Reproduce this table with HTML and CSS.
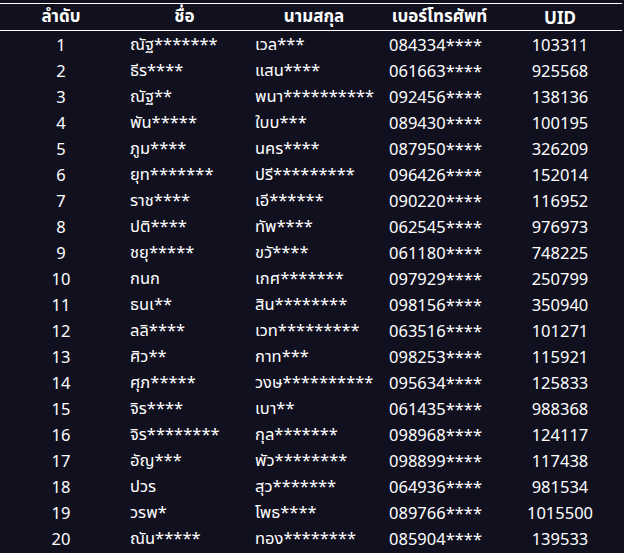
FILE: index.html
```html
<!DOCTYPE html>
<html lang="th">
<head>
<meta charset="utf-8">
<link rel="stylesheet" href="styles.css">
</head>
<body>
<table class="list">
<thead>
<tr><th class="c-no">ลำดับ</th><th class="c-name">ชื่อ</th><th class="c-sur">นามสกุล</th><th class="c-phone">เบอร์โทรศัพท์</th><th class="c-uid">UID</th></tr>
</thead>
<tbody>
<tr><td class="ctr">1</td><td>ณัฐ*******</td><td>เวล***</td><td>084334****</td><td class="ctr">103311</td></tr>
<tr><td class="ctr">2</td><td>ธีร****</td><td>แสน****</td><td>061663****</td><td class="ctr">925568</td></tr>
<tr><td class="ctr">3</td><td>ณัฐ**</td><td>พนา**********</td><td>092456****</td><td class="ctr">138136</td></tr>
<tr><td class="ctr">4</td><td>พัน*****</td><td>ใบบ***</td><td>089430****</td><td class="ctr">100195</td></tr>
<tr><td class="ctr">5</td><td>ภูม****</td><td>นคร****</td><td>087950****</td><td class="ctr">326209</td></tr>
<tr><td class="ctr">6</td><td>ยุท*******</td><td>ปรี*********</td><td>096426****</td><td class="ctr">152014</td></tr>
<tr><td class="ctr">7</td><td>ราช****</td><td>เอี******</td><td>090220****</td><td class="ctr">116952</td></tr>
<tr><td class="ctr">8</td><td>ปติ****</td><td>ทัพ****</td><td>062545****</td><td class="ctr">976973</td></tr>
<tr><td class="ctr">9</td><td>ชยุ*****</td><td>ขวั****</td><td>061180****</td><td class="ctr">748225</td></tr>
<tr><td class="ctr">10</td><td>กนก</td><td>เกศ*******</td><td>097929****</td><td class="ctr">250799</td></tr>
<tr><td class="ctr">11</td><td>ธนเ**</td><td>สิน********</td><td>098156****</td><td class="ctr">350940</td></tr>
<tr><td class="ctr">12</td><td>ลลิ****</td><td>เวท*********</td><td>063516****</td><td class="ctr">101271</td></tr>
<tr><td class="ctr">13</td><td>ศิว**</td><td>กาท***</td><td>098253****</td><td class="ctr">115921</td></tr>
<tr><td class="ctr">14</td><td>ศุภ*****</td><td>วงษ**********</td><td>095634****</td><td class="ctr">125833</td></tr>
<tr><td class="ctr">15</td><td>จิร****</td><td>เบา**</td><td>061435****</td><td class="ctr">988368</td></tr>
<tr><td class="ctr">16</td><td>จิร********</td><td>กุล*******</td><td>098968****</td><td class="ctr">124117</td></tr>
<tr><td class="ctr">17</td><td>อัญ***</td><td>พัว********</td><td>098899****</td><td class="ctr">117438</td></tr>
<tr><td class="ctr">18</td><td>ปวร</td><td>สุว*******</td><td>064936****</td><td class="ctr">981534</td></tr>
<tr><td class="ctr">19</td><td>วรพ*</td><td>โพธ****</td><td>089766****</td><td class="ctr">1015500</td></tr>
<tr><td class="ctr">20</td><td>ณัน*****</td><td>ทอง********</td><td>085904****</td><td class="ctr">139533</td></tr>
</tbody>
</table>
</body>
</html>
```
FILE: styles.css
```css
html, body {
  margin: 0;
  padding: 0;
  background: #10101f;
}
body {
  padding-top: 3px;
  font-family: "Noto Sans", "Noto Sans Thai", "DejaVu Sans", sans-serif;
  font-size: 16.5px;
  color: #ffffff;
}
.list {
  width: 622px;
  table-layout: fixed;
  border-collapse: collapse;
  border-top: 1px solid #ffffff;
}
.c-no { width: 122px; }
.c-name { width: 125px; }
.c-sur { width: 134px; }
.c-phone { width: 117px; }
.c-uid { width: 124px; }
.list th {
  height: 26px;
  padding: 0;
  font-size: 17px;
  font-weight: 700;
  text-align: center;
  border-bottom: 1px solid #ffffff;
  white-space: nowrap;
}
.list td {
  height: 26px;
  padding: 0 0 0 8px;
  text-align: left;
  white-space: nowrap;
}
.list td.ctr {
  padding: 0;
  text-align: center;
}
```
